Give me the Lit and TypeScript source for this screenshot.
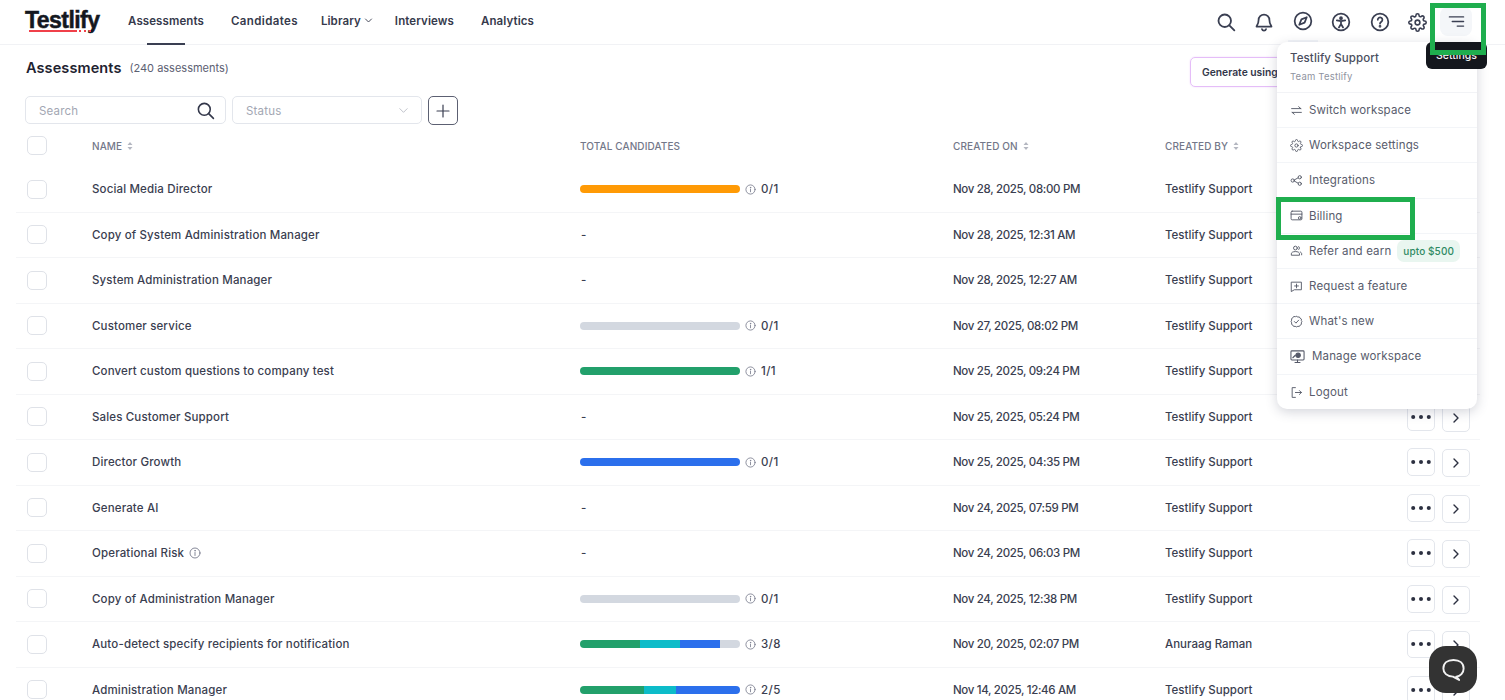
import { LitElement, html, css, svg } from "lit";
import { customElement } from "lit/decorators.js";

type Seg = [string, number];
interface Row { name: string; info?: boolean; segs?: Seg[]; count?: string; date: string; by: string; }

const G = "#22a06b", T = "#0dbcc9", B = "#2b6fec", O = "#ff9a05", N = "#d3d8e0";
const rows: Row[] = [
  { name: "Social Media Director", segs: [[O, 100]], count: "0/1", date: "Nov 28, 2025, 08:00 PM", by: "Testlify Support" },
  { name: "Copy of System Administration Manager", date: "Nov 28, 2025, 12:31 AM", by: "Testlify Support" },
  { name: "System Administration Manager", date: "Nov 28, 2025, 12:27 AM", by: "Testlify Support" },
  { name: "Customer service", segs: [[N, 100]], count: "0/1", date: "Nov 27, 2025, 08:02 PM", by: "Testlify Support" },
  { name: "Convert custom questions to company test", segs: [[G, 100]], count: "1/1", date: "Nov 25, 2025, 09:24 PM", by: "Testlify Support" },
  { name: "Sales Customer Support", date: "Nov 25, 2025, 05:24 PM", by: "Testlify Support" },
  { name: "Director Growth", segs: [[B, 100]], count: "0/1", date: "Nov 25, 2025, 04:35 PM", by: "Testlify Support" },
  { name: "Generate AI", date: "Nov 24, 2025, 07:59 PM", by: "Testlify Support" },
  { name: "Operational Risk", info: true, date: "Nov 24, 2025, 06:03 PM", by: "Testlify Support" },
  { name: "Copy of Administration Manager", segs: [[N, 100]], count: "0/1", date: "Nov 24, 2025, 12:38 PM", by: "Testlify Support" },
  { name: "Auto-detect specify recipients for notification", segs: [[G, 37.5], [T, 25], [B, 25], [N, 12.5]], count: "3/8", date: "Nov 20, 2025, 02:07 PM", by: "Anuraag Raman" },
  { name: "Administration Manager", segs: [[G, 40], [T, 20], [B, 40]], count: "2/5", date: "Nov 14, 2025, 12:46 AM", by: "Testlify Support" },
];

const ic = (size: number, body: unknown, sw = 1.8) => html`<svg width=${size} height=${size} viewBox="0 0 24 24" fill="none" stroke="currentColor" stroke-width=${sw} stroke-linecap="round" stroke-linejoin="round">${body}</svg>`;

const cog = svg`<circle cx="12" cy="12" r="3"/><path d="M19.400 15a1.650 1.650 0 0 0 .33 1.820l.06.06a2 2 0 0 1 0 2.830 2 2 0 0 1-2.830 0l-.06-.06a1.650 1.650 0 0 0-1.820-.33 1.650 1.650 0 0 0-1 1.510V21a2 2 0 0 1-2 2 2 2 0 0 1-2-2v-.09A1.650 1.650 0 0 0 9 19.400a1.650 1.650 0 0 0-1.820.33l-.06.06a2 2 0 0 1-2.830 0 2 2 0 0 1 0-2.830l.06-.06a1.650 1.650 0 0 0 .33-1.820 1.650 1.650 0 0 0-1.510-1H3a2 2 0 0 1-2-2 2 2 0 0 1 2-2h.09A1.650 1.650 0 0 0 4.600 9a1.650 1.650 0 0 0-.33-1.820l-.06-.06a2 2 0 0 1 0-2.830 2 2 0 0 1 2.830 0l.06.06a1.650 1.650 0 0 0 1.820.33H9a1.650 1.650 0 0 0 1-1.510V3a2 2 0 0 1 2-2 2 2 0 0 1 2 2v.09a1.650 1.650 0 0 0 1 1.510 1.650 1.650 0 0 0 1.820-.33l.06-.06a2 2 0 0 1 2.830 0 2 2 0 0 1 0 2.830l-.06.06a1.650 1.650 0 0 0-.33 1.820V9a1.650 1.650 0 0 0 1.510 1H21a2 2 0 0 1 2 2 2 2 0 0 1-2 2h-.09a1.650 1.650 0 0 0-1.510 1z"/>`;

const icons = {
  search: svg`<circle cx="10.500" cy="10.500" r="7.500"/><path d="M16 16l6 6"/>`,
  bell: svg`<path d="M12 3a6.500 6.500 0 0 0-6.500 6.500c0 5-2.500 7-2.500 8h18c0-1-2.500-3-2.500-8A6.500 6.500 0 0 0 12 3z"/><path d="M9.500 20.500a2.600 2.600 0 0 0 5 0"/>`,
  compass: svg`<circle cx="12" cy="12" r="10"/><path d="M16.500 7.500l-2.600 6.400-6.400 2.600 2.600-6.400z"/>`,
  access: svg`<circle cx="12" cy="12" r="10"/><circle cx="12" cy="7.400" r="1.200" fill="currentColor"/><path d="M7 10l5 1 5-1M12 11v3.500M12 14.500l-2.500 4M12 14.500l2.500 4"/>`,
  help: svg`<circle cx="12" cy="12" r="10"/><path d="M9.300 9.300a2.800 2.800 0 1 1 4.300 2.400c-1 .7-1.600 1.200-1.600 2.300"/><circle cx="12" cy="17.200" r=".6" fill="currentColor"/>`,
  gear: cog,
  swap: svg`<path d="M3 8.500h17M16 5l4 3.500M21 15.500H4M8 19l-4-3.500"/>`,
  link: svg`<circle cx="5" cy="12" r="3"/><circle cx="18" cy="6" r="3"/><circle cx="18" cy="18" r="3"/><path d="M8 11l7-4M8 13l7 4"/>`,
  bill: svg`<rect x="2" y="4" width="20" height="16" rx="2"/><path d="M2 9.500h20"/><circle cx="18" cy="16.500" r="2.500" fill="#fff"/>`,
  refer: svg`<circle cx="10" cy="7.500" r="3.500"/><path d="M2.500 20v-2c0-2.500 3-4 7.500-4s7.500 1.500 7.500 4v2z"/><path d="M16 4.500a3.500 3.500 0 0 1 0 6M21.500 20v-2c0-1.500-1-2.500-2.500-3.200"/>`,
  request: svg`<path d="M3 4h18v14H8l-5 3z"/><path d="M12 7.500v7M8.500 11h7"/>`,
  news: svg`<path d="M12 2.500l2.500 1.300 2.800-.2 1.400 2.400 2.400 1.500-.2 2.800L22 12l-1.100 2.500.2 2.800-2.400 1.400-1.400 2.400-2.800-.2L12 22l-2.500-1.100-2.800.2-1.400-2.400-2.400-1.400.2-2.800L2 12l1.100-2.500-.2-2.800 2.400-1.500 1.400-2.400 2.800.2z"/><path d="M8 12l3 3 5-5.500"/>`,
  manage: svg`<rect x="1.500" y="3" width="21" height="14.500" rx="1.500"/><path d="M8 21.500h8M12 17.500v4"/><circle cx="13" cy="10" r="3.500" fill="currentColor"/><path d="M4.500 14l4-4"/>`,
  logout: svg`<path d="M10 3H4v18h6"/><path d="M10 12h11M17.500 8.500L21 12l-3.500 3.500"/>`,
  info: svg`<circle cx="12" cy="12" r="10"/><path d="M12 11v6"/><circle cx="12" cy="7.500" r=".5" fill="currentColor"/>`,
  sort: svg`<path d="M7 10l5-6 5 6zM7 14l5 6 5-6z" fill="currentColor" stroke="none"/>`,
};

const menu: [string, keyof typeof icons, string?][] = [
  ["Switch workspace", "swap"],
  ["Workspace settings", "gear"],
  ["Integrations", "link"],
  ["Billing", "bill"],
  ["Refer and earn", "refer", "pill"],
  ["Request a feature", "request"],
  ["What's new", "news"],
  ["Manage workspace", "manage", "wide"],
  ["Logout", "logout"],
];

@customElement("app-root")
export class AppRoot extends LitElement {
  static styles = css`
    :host { display: block; position: relative; height: 700px; overflow: hidden; background: #fff;
      font-family: Inter, "Liberation Sans", sans-serif; font-size: 12px; color: #33374a; }
    header { display: flex; align-items: center; height: 45px; box-sizing: border-box; border-bottom: 1px solid #f1f2f5; padding-left: 25px; }
    .logo { position: relative; width: 103px; font: 800 23px/28px "Liberation Sans", sans-serif; letter-spacing: -0.550px; color: #14181f; margin-top: -5px; -webkit-text-stroke: .5px #14181f; }
    .logo i { position: absolute; left: 4px; top: 24px; width: 48px; height: 2px; background: #f0404a; }
    .logo b { position: absolute; left: 54px; top: 24px; width: 12px; height: 2px; background: repeating-linear-gradient(90deg, #f0404a 0 2px, transparent 2px 5px); }
    nav { display: flex; align-items: center; flex: 1; gap: 27px; height: 100%; font-weight: 600; font-size: 11.500px; letter-spacing: .1px; color: #363a4c; }
    nav span { position: relative; display: flex; align-items: center; gap: 3px; height: 100%; margin-top: -3px; }
    nav span.on::after { content: ""; position: absolute; left: 19px; right: 19px; bottom: -2px; height: 1.500px; background: #3a3f52; }
    nav span.cand { letter-spacing: .38px; margin-right: -4px; }
    nav span.lib { margin-right: -5px; }
    .tools { display: flex; align-items: center; gap: 18.400px; padding-right: 33px; color: #3a3f52; }
    .tools svg { display: block; }
    .cmp { position: relative; margin-top: -3px; }
    .cmp::after { content: ""; position: absolute; left: -5px; right: -5px; top: 29px; height: 2px; background: #f3f5f9; }
    .burger { width: 32px; height: 29px; background: #f4f6f9; border-radius: 8px; display: flex; align-items: center; justify-content: center; margin-left: -5.400px; margin-top: -1px; }
    .title { display: flex; align-items: center; gap: 8px; height: 44px; padding-left: 26px; margin-bottom: 7px; }
    .title h1 { margin: 0; font-size: 14.500px; font-weight: 600; color: #1e2230; letter-spacing: .1px; }
    .title small { font-size: 11px; color: #5c6072; margin-top: 1px; }
    .gen { position: absolute; left: 1190px; top: 57px; width: 120px; height: 30px; box-sizing: border-box; padding: 0 11px; border: 1.500px solid #e5bdf8; border-radius: 5px; box-shadow: 0 0 2px #efd9fb; display: flex; align-items: center; font-size: 10.300px; font-weight: 600; color: #33374a; white-space: nowrap; overflow: hidden; }
    .filters { display: flex; gap: 6px; padding-left: 25px; height: 28px; }
    .field { box-sizing: border-box; border: 1px solid #e3e6ec; border-radius: 5px; display: flex; align-items: center; justify-content: space-between; padding: 0 12px 0 13px; color: #a3a7b3; font-size: 11.500px; height: 28px; letter-spacing: .2px; }
    .field span { margin-top: 1px; }
    .field.s { width: 201px; padding-right: 10px; }
    .field.s svg { color: #33374a; }
    .field.t { width: 190px; }
    .field svg { display: block; }
    .add { box-sizing: border-box; width: 30px; height: 29px; border: 1px solid #5c6072; border-radius: 5px; display: flex; align-items: center; justify-content: center; color: #3a3f52; }
    .grid { display: grid; grid-template-columns: 76px 488px 373px 212px 242px 1fr; align-items: center; margin: 0 25px 0 16px; }
    .head { height: 43px; font-size: 10px; font-weight: 500; color: #737789; letter-spacing: .1px; }
    .head > span { display: flex; align-items: center; gap: 2px; }
    .head svg { display: block; color: #b4b7c1; }
    .row { height: 45.500px; box-sizing: border-box; border-bottom: 1px solid #f4f5f7; font-size: 11.500px; font-weight: 500; color: #3a3e50; }
    .row:last-child { border: 0; }
    .cb { display: block; box-sizing: border-box; width: 20px; height: 19px; margin-left: 11px; border: 1px solid #dfe2e8; border-radius: 5px; }
    .nm { display: flex; align-items: center; gap: 5px; letter-spacing: .15px; }
    .nm svg, .prog svg { display: block; color: #777b8c; }
    .prog { display: flex; align-items: center; gap: 5px; }
    .bar { display: flex; width: 160px; height: 8px; border-radius: 4px; overflow: hidden; }
    .bar i { display: block; height: 100%; }
    .ct { letter-spacing: .4px; }
    .dt { letter-spacing: -.33px; }
    .acts { display: flex; gap: 7px; margin-top: 1px; }
    .acts span { box-sizing: border-box; width: 28px; height: 28px; border: 1px solid #e3e6ec; border-radius: 5px; background: #fff; display: flex; align-items: center; justify-content: center; color: #2c3040; }
    .acts span + span { margin-top: 1px; }
    .acts svg { display: block; }
    .dash { padding-left: 1px; }
    .menu { position: absolute; left: 1277px; top: 42px; width: 200px; height: 367px; background: #fff; border-radius: 10px; box-shadow: 0 3px 12px rgba(60,65,90,.22); }
    .who { box-sizing: border-box; height: 51px; padding: 9px 13px 0; border-bottom: 1px solid #f2f3f6; }
    .who b { display: block; font-size: 11.500px; font-weight: 500; color: #4a4e5e; letter-spacing: .1px; }
    .who small { display: block; margin-top: 6px; font-size: 9.500px; color: #8f93a0; letter-spacing: .2px; }
    .mi { box-sizing: border-box; display: flex; align-items: center; height: 35.200px; padding-left: 13px; gap: 6px; border-bottom: 1px solid #f3f5f8; font-size: 11.500px; color: #585c6c; letter-spacing: .15px; }
    .mi:last-child { border: 0; }
    .mi svg { display: block; color: #555968; }
    .mi.wide { gap: 7px; }
    .pill { height: 22px; padding: 0 6px; display: flex; align-items: center; border-radius: 7px; background: #e9f6f0; color: #2f8a63; font-size: 10px; font-weight: 500; letter-spacing: .1px; }
    .tip { position: absolute; left: 1426px; top: 42px; width: 61px; height: 27px; box-sizing: border-box; background: #14171d; border-radius: 6px; color: #f4f4f6; font-size: 10.500px; font-weight: 500; display: flex; align-items: flex-end; justify-content: center; padding-bottom: 7px; }
    .mark { position: absolute; box-sizing: border-box; border: 5px solid #1fae4e; }
    .m1 { left: 1430px; top: 3px; width: 56px; height: 52px; }
    .m2 { left: 1276px; top: 197px; width: 139px; height: 43px; }
    .chat { position: absolute; left: 1429px; top: 646px; width: 48px; height: 47px; border-radius: 17px; background: #333; display: flex; align-items: center; justify-content: center; color: #f2f2f2; }
    .chat svg { display: block; }
  `;

  render() {
    return html`
      <header>
        <div class="logo">Testlify<i></i><b></b></div>
        <nav>
          <span class="on">Assessments</span>
          <span class="cand">Candidates</span>
          <span class="lib">Library ${ic(9, svg`<path d="M4 8l8 8 8-8"/>`, 2.400)}</span>
          <span>Interviews</span>
          <span>Analytics</span>
        </nav>
        <div class="tools">
          ${ic(20, icons.search, 2.200)}
          ${ic(20, icons.bell, 2.100)}
          <div class="cmp">${ic(20, icons.compass, 2.100)}</div>
          ${ic(20, icons.access, 2.100)}
          ${ic(20, icons.help, 2.100)}
          ${ic(19, icons.gear, 2)}
          <div class="burger">${ic(17, svg`<path d="M2 5.500h20M6 12h16M13 18.500h9"/>`, 1.900)}</div>
        </div>
      </header>
      <div class="title"><h1>Assessments</h1><small>(240 assessments)</small></div>
      <div class="gen">Generate using AI</div>
      <div class="filters">
        <div class="field s"><span>Search</span>${ic(19, icons.search, 2)}</div>
        <div class="field t"><span>Status</span>${ic(11, svg`<path d="M4 8l8 8 8-8"/>`, 1.500)}</div>
        <div class="add">${ic(16, svg`<path d="M12 3v18M3 12h18"/>`, 1.800)}</div>
      </div>
      <div class="grid head">
        <i class="cb"></i>
        <span>NAME ${ic(12, icons.sort)}</span>
        <span>TOTAL CANDIDATES</span>
        <span>CREATED ON ${ic(12, icons.sort)}</span>
        <span>CREATED BY ${ic(12, icons.sort)}</span>
        <span></span>
      </div>
      ${rows.map((r) => html`
        <div class="grid row">
          <i class="cb"></i>
          <div class="nm">${r.name}${r.info ? ic(12, icons.info, 1.800) : ""}</div>
          ${r.segs
            ? html`<div class="prog"><div class="bar">${r.segs.map(([c, w]) => html`<i style="background:${c};width:${w}%"></i>`)}</div>${ic(11, icons.info, 1.800)}<span class="ct">${r.count}</span></div>`
            : html`<div class="dash">-</div>`}
          <div class="dt">${r.date}</div>
          <div>${r.by}</div>
          <div class="acts">
            <span>${ic(22, svg`<circle cx="3.500" cy="12" r="2.200" fill="currentColor" stroke="none"/><circle cx="12" cy="12" r="2.200" fill="currentColor" stroke="none"/><circle cx="20.500" cy="12" r="2.200" fill="currentColor" stroke="none"/>`)}</span>
            <span>${ic(12, svg`<path d="M8 4l8 8-8 8"/>`, 2.800)}</span>
          </div>
        </div>`)}
      <div class="menu">
        <div class="who"><b>Testlify Support</b><small>Team Testlify</small></div>
        ${menu.map(([label, icon, opt]) => html`
          <div class="mi ${opt === "wide" ? "wide" : ""}">
            ${ic(opt === "wide" ? 15 : 13, icons[icon], 1.700)}
            <span>${label}</span>
            ${opt === "pill" ? html`<span class="pill">upto $500</span>` : ""}
          </div>`)}
      </div>
      <div class="tip">Settings</div>
      <div class="mark m1"></div>
      <div class="mark m2"></div>
      <div class="chat">${ic(27, svg`<path d="M12 3.500c5.500 0 9 3 9 7.500 0 4-3 7-6.500 7.300l2.500 3-5.500-3C6 18.300 3 15 3 11c0-4.500 3.500-7.500 9-7.500z"/>`, 1.700)}</div>
    `;
  }
}
